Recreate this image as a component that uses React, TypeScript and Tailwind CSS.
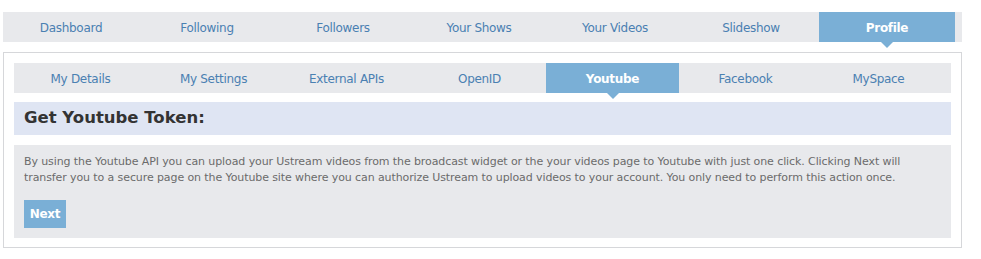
import React from 'react';

const mainTabs = ['Dashboard', 'Following', 'Followers', 'Your Shows', 'Your Videos', 'Slideshow', 'Profile'];
const subTabs = ['My Details', 'My Settings', 'External APIs', 'OpenID', 'Youtube', 'Facebook', 'MySpace'];

const font = { fontFamily: '"DejaVu Sans", Verdana, sans-serif' };

const App = () => {
    return (
        <div className="w-[981px] h-[259px] bg-white pt-3 pl-[3px]" style={font}>
            {/* main nav */}
            <div className="w-[959px] h-[30px] bg-[#e8e9ec] flex">
                {mainTabs.map((t) => {
                    const active = t === 'Profile';
                    return (
                        <div
                            key={t}
                            className={`relative w-[136px] h-full flex items-center justify-center pt-[1px] text-[12px] tracking-[-0.3px] ${active ? 'bg-[#7aafd6] text-white font-bold' : 'text-[#4a80b2]'}`}
                        >
                            {t}
                            {active && (
                                <div className="absolute left-1/2 -translate-x-1/2 top-full w-0 h-0 border-l-[6px] border-r-[6px] border-t-[6px] border-l-transparent border-r-transparent border-t-[#7aafd6]"></div>
                            )}
                        </div>
                    );
                })}
            </div>

            {/* content box */}
            <div className="mt-[10px] w-[959px] h-[196px] border border-[#d6d7da] px-[10px] pt-[10px]">
                <div className="w-[937px] h-[30px] bg-[#e8e9ec] flex">
                    {subTabs.map((t) => {
                        const active = t === 'Youtube';
                        return (
                            <div
                                key={t}
                                className={`relative w-[133px] h-full flex items-center justify-center pt-[1px] text-[12px] tracking-[-0.3px] ${active ? 'bg-[#7aafd6] text-white font-bold' : 'text-[#4a80b2]'}`}
                            >
                                {t}
                                {active && (
                                    <div className="absolute left-1/2 -translate-x-1/2 top-full w-0 h-0 border-l-[6px] border-r-[6px] border-t-[6px] border-l-transparent border-r-transparent border-t-[#7aafd6]"></div>
                                )}
                            </div>
                        );
                    })}
                </div>

                <div className="mt-[9px] w-[937px] h-[33px] bg-[#dfe5f3] flex items-center px-[10px]">
                    <h2 className="text-[16.5px] font-bold text-[#333333]">Get Youtube Token:</h2>
                </div>

                <div className="mt-[10px] w-[937px] h-[93px] bg-[#e8e9ec] px-[10px] pt-[9px]">
                    <p className="text-[11px] leading-[16px] tracking-[-0.1px] text-[#6b6b6b]">
                        By using the Youtube API you can upload your Ustream videos from the broadcast widget or the your videos page to Youtube with just one click. Clicking Next will transfer you to a secure page on the Youtube site where you can authorize Ustream to upload videos to your account. You only need to perform this action once.
                    </p>
                    <button className="mt-[14px] w-[42px] h-[28px] bg-[#7aafd6] text-white font-bold text-[12px] tracking-[-0.3px] flex items-center justify-center">
                        Next
                    </button>
                </div>
            </div>
        </div>
    );
};

export default App;
